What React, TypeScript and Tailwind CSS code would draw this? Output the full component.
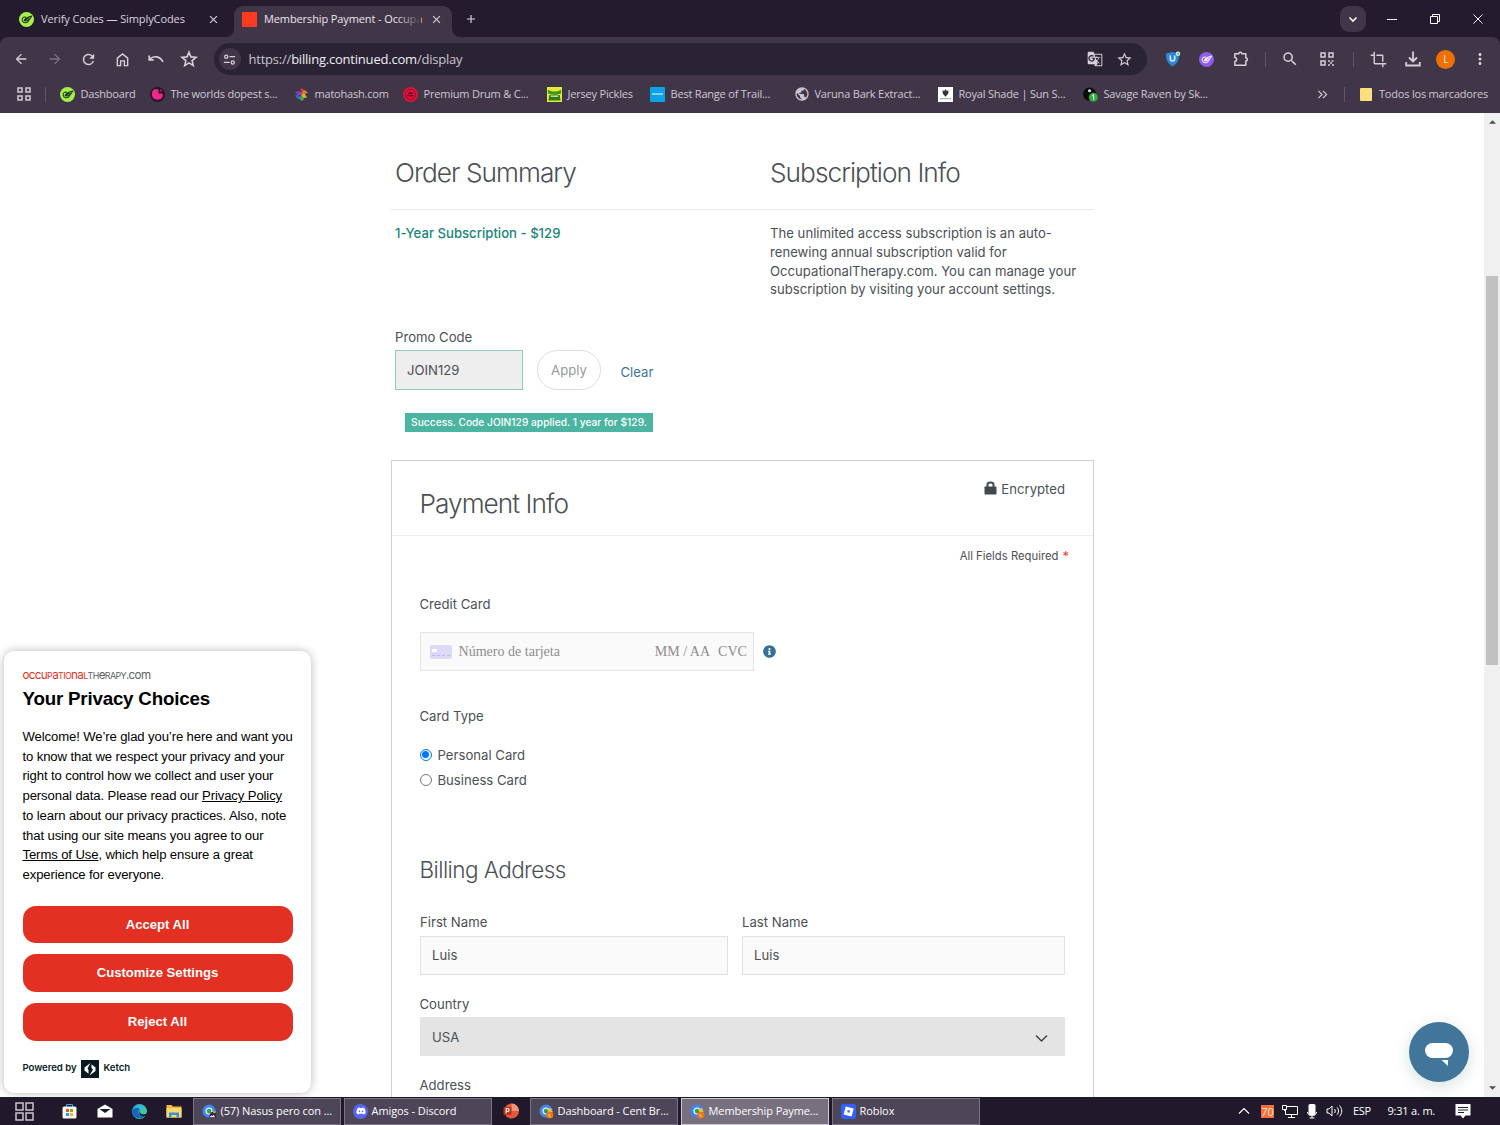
import type { ReactNode } from 'react';
import {
  MdArrowBack,
  MdArrowForward,
  MdClose,
  MdAdd,
  MdRefresh,
  MdStarBorder,
  MdSearch,
  MdCrop,
  MdMoreVert,
  MdGTranslate,
  MdPublic,
} from 'react-icons/md';
import { FaDiscord, FaInfoCircle } from 'react-icons/fa';

const bookmarks = [
  { label: 'Dashboard', icon: <SimplyIcon />, className: 'w-[90px]' },
  { label: 'The worlds dopest s...', icon: <DopestIcon />, className: 'w-[144px]' },
  { label: 'matohash.com', icon: <HashIcon />, className: 'w-[109px]' },
  { label: 'Premium Drum & C...', icon: <DrumIcon />, className: 'w-[144px]' },
  { label: 'Jersey Pickles', icon: <PickleIcon />, className: 'w-[103px]' },
  { label: 'Best Range of Trail...', icon: <TrailIcon />, className: 'w-[144px]' },
  { label: 'Varuna Bark Extract...', icon: <MdPublic className="w-4 h-4 text-[#c9c3d0]" />, className: 'w-[144px]' },
  { label: 'Royal Shade | Sun S...', icon: <RoyalIcon />, className: 'w-[145px]' },
  { label: 'Savage Raven by Sk...', icon: <RavenIcon />, className: 'w-[140px]' },
];

function SimplyIcon({ bg = '#a6f04c', fg = '#22301a' }: { bg?: string; fg?: string }) {
  return (
    <svg viewBox="0 0 16 16" className="w-[15px] h-[15px]" fill="none">
      <circle cx="8" cy="8" r="8" fill={bg} />
      <g stroke={fg} strokeWidth="1.1" strokeLinecap="round" strokeLinejoin="round">
        <path d="M7.500 5.500c-3-.6-4.700 1.500-4 3.800.8 2.500 4.500 3 6.300.8 1-1.200 1.200-2.400 1-3.600" />
        <path d="M5.500 9.300c.5-2.300 2.500-3.600 8-5-1.300 3-3.500 5-6 5.200zM6.800 8.500l3-1.800" />
      </g>
    </svg>
  );
}

function DopestIcon() {
  return (
    <svg viewBox="0 0 16 16" className="w-[15px] h-[15px]">
      <circle cx="8" cy="8" r="8" fill="#2a1226" />
      <path d="M4.500 2.500h4.500v3c0 1.500 1 2 2.500 1.500h2v3c-.8 2.500-3 3.500-5.500 3.500C4 13.500 2 11 2 7.500c0-2.300 1-4 2.500-5z" fill="#f0268c" />
      <path d="M11 2.500l2.500 2h-2.500z" fill="#f0268c" />
    </svg>
  );
}

function HashIcon() {
  return (
    <svg viewBox="0 0 16 16" className="w-[15px] h-[15px]">
      <path d="M7 1l4 2-3 3z" fill="#d83a4a" />
      <path d="M1 5l5-1 1 4-3 1z" fill="#7a3fc0" />
      <path d="M11 3l4 3-5 2-2-2z" fill="#e07a2c" />
      <path d="M1 9l4-1 2 3-3 2z" fill="#3a62d0" />
      <path d="M7 8l4-1 3 4-4 1z" fill="#d8b02e" />
      <path d="M5 12l3-3 3 4-3 2z" fill="#38a860" />
      <circle cx="7.500" cy="7" r="1.500" fill="#b64aa0" />
    </svg>
  );
}

function DrumIcon() {
  return (
    <svg viewBox="0 0 16 16" className="w-[15px] h-[15px]" fill="none">
      <circle cx="8" cy="8" r="8" fill="#e0123c" />
      <circle cx="8" cy="8" r="5.400" stroke="#7c0c2a" strokeWidth=".9" />
      <path d="M4.500 9.300h7M5.700 7.500c1-1.700 3.600-1.700 4.600 0" stroke="#4a0a1c" strokeWidth="1.200" />
    </svg>
  );
}

function PickleIcon() {
  return (
    <svg viewBox="0 0 16 16" className="w-[15px] h-[15px]">
      <rect width="16" height="16" fill="#e6e83a" />
      <path d="M1 3c4 2.500 10 2.500 14 0v4c-4 2-10 2-14 0z" fill="#3f9a1c" />
      <path d="M2.500 8.500h11l1 6h-13z" fill="#2f7a18" />
      <path d="M4 9h8v1.600H4z" fill="#c8dca8" />
    </svg>
  );
}

function TrailIcon() {
  return (
    <div className="w-[15px] h-[15px] bg-[#0aa3ea] rounded-[1px] flex items-center justify-center">
      <div className="w-[11px] h-[2px] bg-white/50" />
    </div>
  );
}

function RoyalIcon() {
  return (
    <svg viewBox="0 0 16 16" className="w-[15px] h-[15px]">
      <rect width="16" height="16" fill="#fff" />
      <path d="M5 3l1.500 1.500L8 2l1.500 2.500L11 3v4l-3 3.500L5 7z" fill="#333" />
      <path d="M2 12.500h12" stroke="#999" />
    </svg>
  );
}

function RavenIcon() {
  return (
    <svg viewBox="0 0 16 16" className="w-[15px] h-[15px]">
      <circle cx="7" cy="7.500" r="7" fill="#0b0b0b" />
      <circle cx="7" cy="4" r="1.700" fill="#ddd" />
      <circle cx="11" cy="11" r="4.800" fill="#2fae3c" />
      <path d="M9.800 9.700l1.500-1.200v5" stroke="#fff" strokeWidth="1.200" fill="none" />
    </svg>
  );
}

function ChromeIcon({ badge }: { badge: 'orange' | 'dark' }) {
  return (
    <svg viewBox="0 0 16 16" className="w-[15px] h-[15px] shrink-0">
      <circle cx="7.500" cy="7.500" r="7" fill="#3f86ee" />
      <path d="M14.500 7.500a7 7 0 0 1-6 7l2.800-6z" fill="#f3c02f" />
      <circle cx="7.500" cy="7.500" r="3.800" fill="#e9f2ec" />
      <circle cx="7.500" cy="7.500" r="2.500" fill="#2f9e58" />
      {badge === 'orange' ? (
        <>
          <path d="M9 5l4-.5 1 4-4 2z" fill="#f7c53c" />
          <circle cx="11.500" cy="11.700" r="3.800" fill="#ee7410" />
          <path d="M10.700 10v3h2" stroke="#ffd9b0" strokeWidth=".8" fill="none" />
        </>
      ) : (
        <>
          <path d="M8 14c0-5 2-6 4-5l3 1v5H8z" fill="#35254a" />
          <path d="M8.500 14l1.200-2 1.500 1 1.300-1.500L14 14z" fill="#f4f0f4" />
        </>
      )}
    </svg>
  );
}

function Cell({ className, children }: { className: string; children: ReactNode }) {
  return <div className={`flex shrink-0 items-center justify-center ${className}`}>{children}</div>;
}

function TabStrip() {
  return (
    <div className="flex h-[37px] bg-[#241c2e] text-[#d9d3de]">
      <div className="flex items-center w-[226px] pl-[18.500px] pt-[2px]">
        <SimplyIcon />
        <span className="ml-[7.500px] w-[160px] text-[11px] tracking-[-0.09px] whitespace-nowrap">Verify Codes — SimplyCodes</span>
        <MdClose className="ml-[5.500px] w-[13px] h-[13px]" />
      </div>
      <div className="flex items-end">
        <div className="w-2 h-2 bg-[#403648]">
          <div className="w-2 h-2 bg-[#241c2e] rounded-br-lg" />
        </div>
        <div className="flex items-center w-[218px] h-[31px] mt-[6px] pl-2 pb-[4px] bg-[#403648] rounded-t-[9px]">
          <div className="w-[15px] h-[15px] bg-[#fb3a22]" />
          <div className="relative ml-[7px] w-[157px] whitespace-nowrap text-[11px] tracking-[-0.11px] text-[#eae6ee]">
            Membership Payment - Occupa
            <div className="absolute right-0 top-0 w-6 h-full bg-gradient-to-r from-transparent to-[#403648]" />
          </div>
          <MdClose className="ml-[9px] w-[13px] h-[13px]" />
        </div>
        <div className="w-2 h-2 bg-[#403648]">
          <div className="w-2 h-2 bg-[#241c2e] rounded-bl-lg" />
        </div>
      </div>
      <Cell className="w-[21px] pt-[1px]">
        <MdAdd className="w-[14px] h-[14px]" />
      </Cell>
      <div className="flex-1" />
      <div className="flex items-center pt-[1px] pr-[1px]">
        <Cell className="w-[26px] h-[26px] rounded-[9px] bg-[#403648]">
          <svg viewBox="0 0 12 12" className="w-3 h-3" fill="none" stroke="#fff" strokeWidth="1.600">
            <path d="M2.500 4.500L6 8l3.500-3.500" />
          </svg>
        </Cell>
        <Cell className="w-[52px]">
          <div className="w-[10px] h-px bg-white" />
        </Cell>
        <Cell className="w-[34px]">
          <svg viewBox="0 0 12 12" className="w-3 h-3" fill="none" stroke="#fff" strokeWidth="1">
            <path d="M1.500 3.500h7v7h-7zM3.500 3.500v-2h7v7h-2" />
          </svg>
        </Cell>
        <Cell className="w-[42px] ml-[5px]">
          <svg viewBox="0 0 12 12" className="w-3 h-3" stroke="#fff" strokeWidth="1">
            <path d="M1.500 1.500l9 9M10.500 1.500l-9 9" />
          </svg>
        </Cell>
      </div>
    </div>
  );
}

function Toolbar() {
  return (
    <div className="flex items-center h-[44px] pl-[4.600px] text-[#d5cedb] bg-[#403648] rounded-t-lg">
      <Cell className="w-[33.600px]">
        <MdArrowBack className="w-4 h-4" />
      </Cell>
      <Cell className="w-[33.600px]">
        <MdArrowForward className="w-4 h-4 text-[#7b7183]" />
      </Cell>
      <Cell className="w-[33.600px]">
        <MdRefresh className="w-[17px] h-[17px]" />
      </Cell>
      <Cell className="w-[33.600px]">
        <svg viewBox="0 0 16 16" className="w-[15px] h-[15px]" fill="none" stroke="currentColor" strokeWidth="1.500">
          <path d="M2.500 6.500L8 2l5.500 4.500v8H10V9.500H6v5H2.500z" />
        </svg>
      </Cell>
      <Cell className="w-[33.600px]">
        <svg viewBox="0 0 16 16" className="w-4 h-4" fill="none" stroke="currentColor" strokeWidth="1.700">
          <path d="M1.200 4.500v4.300h4.500M1.500 8.500C5 4.500 12 4.500 15 11" />
        </svg>
      </Cell>
      <Cell className="w-[33.600px]">
        <svg viewBox="0 0 18 18" className="w-[18px] h-[18px]" fill="none" stroke="currentColor" strokeWidth="1.600">
          <path d="M9 2.200l1.900 4.700 5.100.4-3.900 3.300 1.200 5L9 12.900l-4.300 2.700 1.200-5L2 7.300l5.100-.4z" />
        </svg>
      </Cell>
      <div className="flex items-center w-[933px] h-8 ml-[7.800px] pl-[5px] rounded-full bg-[#292333]">
        <Cell className="w-[22px] h-[22px] rounded-full bg-[#403648]">
          <svg viewBox="0 0 14 14" className="w-[13px] h-[13px]" fill="none" stroke="currentColor" strokeWidth="1.400">
            <circle cx="3.500" cy="4" r="1.700" />
            <path d="M7 4h6M1 10.200h6" />
            <circle cx="10.500" cy="10.200" r="1.700" />
          </svg>
        </Cell>
        <span className="flex-1 ml-[7.500px] pt-px text-[13px] tracking-[-0.21px] text-[#cbc5d1]">
          https://<span className="text-[#f0edf3]">billing.continued.com</span>/display
        </span>
        <Cell className="w-[30px]">
          <MdGTranslate className="w-4 h-4" />
        </Cell>
        <Cell className="w-[30px] mr-[7px]">
          <MdStarBorder className="w-[17px] h-[17px]" />
        </Cell>
      </div>
      <Cell className="w-[34px] ml-[9px]">
        <svg viewBox="0 0 16 16" className="w-4 h-4">
          <path d="M1 2.500L7.500 1 14 2.500c.3 6-1.500 10-6.500 13C2.500 12.500.700 8.500 1 2.500z" fill="#2f86d8" />
          <path d="M5.300 4.500v3.300c0 3 4.400 3 4.400 0V4.500" stroke="#d6ecff" strokeWidth="1.600" fill="none" />
          <circle cx="13" cy="2.700" r="2.200" fill="#d6f4ea" />
          <circle cx="13" cy="2.700" r="1" fill="#3cb58c" />
        </svg>
      </Cell>
      <Cell className="w-[34px]">
        <SimplyIcon bg="#8f5cf0" fg="#f2eaff" />
      </Cell>
      <Cell className="w-[34px]">
        <svg viewBox="0 0 16 16" className="w-4 h-4" fill="none" stroke="currentColor" strokeWidth="1.500" strokeLinejoin="round">
          <path d="M1.800 2.800h4c0-2 3-2 3 0h4V7c2.200 0 2.200 3 0 3v4.200h-11v-3.600c2.400 0 2.400-4 0-4z" />
        </svg>
      </Cell>
      <Cell className="w-[16px]">
        <div className="w-px h-[15px] bg-[#5f5568]" />
      </Cell>
      <Cell className="w-8">
        <MdSearch className="w-[18px] h-[18px]" />
      </Cell>
      <Cell className="w-[42px]">
        <svg viewBox="0 0 14 14" className="w-[14px] h-[14px]" fill="none" stroke="currentColor" strokeWidth="1.500">
          <path d="M1 1h4v4H1zM9 1h4v4H9zM1 9h4v4H1z" />
          <path d="M8 9h2M11.500 9h2M10 11h2M8 13h2M12 13h2" strokeDasharray="2 .5" />
        </svg>
      </Cell>
      <Cell className="w-3">
        <div className="w-px h-[15px] bg-[#5f5568]" />
      </Cell>
      <Cell className="w-[38px]">
        <MdCrop className="w-[17px] h-[17px]" />
      </Cell>
      <Cell className="w-[30px]">
        <svg viewBox="0 0 16 16" className="w-4 h-4" fill="none" stroke="currentColor" strokeWidth="1.800">
          <path d="M8 .5v9.500M4 6.500l4 4 4-4M1.200 11v3.500h13.600V11" />
        </svg>
      </Cell>
      <Cell className="w-9">
        <div className="w-[19px] h-[19px] rounded-full bg-[#ee6f06] text-[#ffe6cf] text-[10px] flex items-center justify-center">L</div>
      </Cell>
      <Cell className="w-8">
        <MdMoreVert className="w-[18px] h-[18px]" />
      </Cell>
    </div>
  );
}

function BookmarksBar() {
  return (
    <div className="flex items-center h-[32px] pb-[6px] text-[11px] tracking-[-0.2px] text-[#cfc8d5] bg-[#403648] whitespace-nowrap">
      <Cell className="w-[43px] pl-[5px]">
        <svg viewBox="0 0 14 14" className="w-[14px] h-[14px]" fill="none" stroke="currentColor" strokeWidth="1.500">
          <path d="M1 1h4v4H1zM9 1h4v4H9zM1 9h4v4H1zM9 9h4v4H9z" />
        </svg>
      </Cell>
      <div className="ml-[2px] mr-[14px] w-px h-[15px] bg-[#5f5568]" />
      {bookmarks.map((b) => (
        <div key={b.label} className={`flex shrink-0 items-center gap-[5.500px] ${b.className}`}>
          <div className="w-[15px] shrink-0">{b.icon}</div>
          <span>{b.label}</span>
        </div>
      ))}
      <div className="flex-1" />
      <svg viewBox="0 0 12 12" className="w-[11px] h-[11px] mr-4" fill="none" stroke="currentColor" strokeWidth="1.300">
        <path d="M1.500 2L5.500 6l-4 4M6.500 2l4 4-4 4" />
      </svg>
      <div className="w-px h-[15px] bg-[#5f5568]" />
      <div className="w-3 h-[13px] ml-[15px] mr-[7px] bg-[#fbdf7c] rounded-[1px]" />
      <span className="w-[121px]">Todos los marcadores</span>
    </div>
  );
}

function Field({ label, value, className }: { label: string; value: string; className: string }) {
  return (
    <div className={className}>
      <div className="h-[19px] leading-[20px]">{label}</div>
      <div className="mt-[5px] h-[39px] flex items-center pl-[11px] border border-[#e2e2e2] bg-[#fafafa]">{value}</div>
    </div>
  );
}

function OrderSummary() {
  return (
    <>
      <div className="flex pt-[41px] pl-[4px] pb-[17px] border-b border-[#e9e9e9] text-[26.250px] leading-[38px] font-light tracking-[-0.97px]">
        <h1 className="w-[375px]">Order Summary</h1>
        <h1>Subscription Info</h1>
      </div>
      <div className="flex pt-[14px] pl-[4px]">
        <div className="w-[375px] font-medium text-[#188676]">1-Year Subscription - $129</div>
        <p className="whitespace-nowrap">
          The unlimited access subscription is an auto-
          <br />
          renewing annual subscription valid for
          <br />
          OccupationalTherapy.com. You can manage your
          <br />
          subscription by visiting your account settings.
        </p>
      </div>
      <div className="mt-[28px] ml-[4px] h-[19px] leading-[20px]">Promo Code</div>
      <div className="mt-[4px] ml-[4px] h-10 flex items-center">
        <div className="w-[128px] h-10 pl-[11px] flex items-center border border-[#8fcdb9] bg-[#eeeeee]">JOIN129</div>
        <button className="ml-[14px] w-[64px] h-10 rounded-full border border-[#dedede] text-[#96999b]">Apply</button>
        <a className="ml-[19.500px] mt-[5px] text-[#41759b]">Clear</a>
      </div>
      <div className="mt-[23px] ml-[14px] w-[248px] h-[19px] flex items-center justify-center bg-[#4cb5a2] text-white text-[10.200px] font-medium whitespace-nowrap">
        Success. Code JOIN129 applied. 1 year for $129.
      </div>
    </>
  );
}

function PaymentPanel() {
  return (
    <div className="mt-[28px] h-[660px] border border-[#cfd1d2]">
      <div className="flex justify-between h-[75px] pl-[27.500px] pr-[28px] border-b border-[#eeeeee]">
        <h1 className="pt-[24px] text-[26.250px] leading-[38px] font-light tracking-[-0.97px]">Payment Info</h1>
        <div className="flex items-start pt-[19px] gap-[4px]">
          <svg viewBox="0 0 13 14" className="w-[13px] h-[14px] mt-[1px]">
            <path d="M3.500 6V3.500Q3.500 1.500 6.500 1.500T9.500 3.500V6" fill="none" stroke="#43484d" strokeWidth="2" />
            <rect x=".5" y="5.500" width="12" height="8" rx=".8" fill="#43484d" />
          </svg>
          Encrypted
        </div>
      </div>
      <div className="mt-[10px] mr-[24px] h-[19px] leading-[20px] flex justify-end gap-[4px] text-[11.250px]">
        All Fields Required <span className="text-[#e8432f] text-[13px]">*</span>
      </div>
      <div className="pl-[27.500px]">
        <div className="mt-[29px] h-[19px] leading-[20px]">Credit Card</div>
        <div className="mt-[19px] ml-[.5px] flex items-center">
          <div className="flex items-center w-[334px] h-[39px] pl-[9px] pr-[6px] border border-[#e4e4e4] bg-[#fafafa] font-['Liberation_Serif',serif] text-[14.060px] tracking-normal text-[#8d8d8d]">
            <div className="w-[22px] h-[14px] rounded-[2px] bg-[#dcdaf6] flex flex-col justify-between pt-[4px] pb-[3px] px-[2px]">
              <div className="w-[5px] h-[3px] bg-white rounded-[1px]" />
              <div className="h-px border-t border-dashed border-[#bdb9e8]" />
            </div>
            <span className="ml-[6.500px]">Número de tarjeta</span>
            <span className="ml-auto">MM / AA</span>
            <span className="ml-[8px]">CVC</span>
          </div>
          <FaInfoCircle className="ml-[9px] w-[13px] h-[13px] text-[#386f96]" />
        </div>
        <div className="mt-[35px] h-[19px] leading-[20px]">Card Type</div>
        <label className="mt-[20px] h-[19px] flex items-center gap-[6px]">
          <span className="w-3 h-3 rounded-full border-[1.500px] border-[#0075ff] flex items-center justify-center">
            <span className="w-[7px] h-[7px] rounded-full bg-[#0075ff]" />
          </span>
          <span className="leading-[20px]">Personal Card</span>
        </label>
        <label className="mt-[6.500px] h-[19px] flex items-center gap-[6px]">
          <span className="w-3 h-3 rounded-full border border-[#767676]" />
          <span className="leading-[20px]">Business Card</span>
        </label>
        <h2 className="mt-[65.500px] text-[22.500px] leading-[30px] font-light tracking-[-0.57px]">Billing Address</h2>
        <div className="mt-[27px] ml-[.5px] flex gap-[14px]">
          <Field label="First Name" value="Luis" className="w-[308px]" />
          <Field label="Last Name" value="Luis" className="w-[323px]" />
        </div>
        <div className="mt-[19px] h-[19px] leading-[20px]">Country</div>
        <div className="mt-[4px] ml-[.5px] w-[645px] h-[39px] pl-[12px] pr-[17px] flex items-center justify-between bg-[#e4e4e4]">
          <span className="pt-px">USA</span>
          <svg viewBox="0 0 13 13" className="w-[13px] h-[13px] mt-[3px]" fill="none" stroke="#444" strokeWidth="1.500">
            <path d="M1 3.500l5.500 5.500L12 3.500" />
          </svg>
        </div>
        <div className="mt-[19px] h-[19px] leading-[20px]">Address</div>
      </div>
    </div>
  );
}

function PrivacyCard() {
  return (
    <div className="absolute left-[4px] top-[538px] w-[307px] h-[442px] px-[18.500px] rounded-[10px] bg-white shadow-[0_0_10px_rgba(0,0,0,0.28)] font-['Liberation_Sans',Arial,sans-serif] text-black">
      <div className="mt-[18px] h-[12px] flex items-baseline font-['Inter',sans-serif] text-[11.600px] leading-[12px] tracking-[-0.62px] text-[#5d6063] whitespace-nowrap">
        <span className="text-[#e2301f]">
          occu<span className="text-[8.900px]">P</span>a<span className="text-[8.900px]">TIO</span>na<span className="text-[8.900px]">L</span>
        </span>
        <span className="text-[8.900px]">TH</span>e<span className="text-[8.900px]">RAPY</span>.com
      </div>
      <h2 className="mt-[6px] text-[18.750px] leading-[24px] font-bold tracking-[-0.2px]">Your Privacy Choices</h2>
      <p className="mt-[16px] text-[13.125px] leading-[19.700px] tracking-[-0.11px] whitespace-nowrap">
        Welcome! We’re glad you’re here and want you
        <br />
        to know that we respect your privacy and your
        <br />
        right to control how we collect and user your
        <br />
        personal data. Please read our <u>Privacy Policy</u>
        <br />
        to learn about our privacy practices. Also, note
        <br />
        that using our site means you agree to our
        <br />
        <u>Terms of Use</u>, which help ensure a great
        <br />
        experience for everyone.
      </p>
      <div className="mt-[21px] flex flex-col gap-[11.250px]">
        {['Accept All', 'Customize Settings', 'Reject All'].map((text) => (
          <button key={text} className="h-[37.500px] rounded-[13px] bg-[#e23022] text-white text-[13.125px] font-bold tracking-normal">
            {text}
          </button>
        ))}
      </div>
      <div className="mt-[19px] flex items-center text-[9.600px] tracking-[-0.05px] font-semibold text-[#071c26] font-['Inter',sans-serif]">
        <span className="w-[53px] whitespace-nowrap">Powered by</span>
        <svg viewBox="0 0 18 18" className="w-[18px] h-[18px] mx-[5px]">
          <rect width="18" height="18" fill="#071821" />
          <path d="M9.500 3L3.500 7.500v3L6 12.500l1.500 1.200V10L6.500 8.500zM8.500 15.500l6-4.500V7.500L12 5.500l-1.500-1.200V8L12 9.500z" fill="#fff" />
        </svg>
        Ketch
      </div>
    </div>
  );
}

function Scrollbar() {
  return (
    <div className="w-4 flex flex-col items-center justify-between bg-[#f0f0f0]">
      <svg viewBox="0 0 8 4" className="w-[7px] h-[4px] mt-[7px]">
        <path d="M0 4l4-4 4 4z" fill="#505050" />
      </svg>
      <div className="w-3 h-[389px] mt-[152px] mb-auto bg-[#c1c1c1]" />
      <svg viewBox="0 0 8 4" className="w-[7px] h-[4px] mb-[7px]">
        <path d="M0 0l4 4 4-4z" fill="#505050" />
      </svg>
    </div>
  );
}

function ChatButton() {
  return (
    <div className="absolute left-[1409px] top-[909px] w-[60px] h-[60px] rounded-full bg-[#41769a] shadow-[0_4px_16px_rgba(0,60,60,0.16)]">
      <svg viewBox="0 0 60 60" className="w-full h-full">
        <rect x="16" y="21" width="28" height="15" rx="7.500" fill="#fff" />
        <path d="M32.500 38h6.500v6z" fill="#fff" />
      </svg>
    </div>
  );
}

function TaskButton({ label, icon, active }: { label: string; icon: ReactNode; active?: boolean }) {
  return (
    <div
      className={`flex shrink-0 items-center gap-[3.500px] w-[148px] h-[27px] pl-2 border text-white ${
        active ? 'bg-[#77707f] border-[#cdc8d2]' : 'bg-[#4d4558] border-[#7c7486]'
      }`}
    >
      {icon}
      <span>{label}</span>
    </div>
  );
}

function Taskbar() {
  return (
    <div className="flex items-center h-[28px] bg-[#20182b] text-[11px] tracking-[-0.08px] text-white whitespace-nowrap">
      <Cell className="w-[52px] pr-[3px]">
        <svg viewBox="0 0 19 19" className="w-[19px] h-[19px]" fill="none" stroke="#c8c4cc" strokeWidth="1.500">
          <path d="M1 1h7v7H1zM11 1h7v7h-7zM1 11h7v7H1zM11 11h7v7h-7z" />
        </svg>
      </Cell>
      <Cell className="w-[35px]">
        <svg viewBox="0 0 15 16" className="w-[15px] h-4">
          <path d="M4.500 4V1.500h6V4" stroke="#3fa4e6" fill="none" />
          <rect x=".5" y="3.500" width="14" height="12" rx="1.500" fill="#f6f6f6" />
          <path d="M4 6h3v3H4z" fill="#ee4f26" />
          <path d="M8 6h3v3H8z" fill="#7db90a" />
          <path d="M4 10h3v3H4z" fill="#1ba1e8" />
          <path d="M8 10h3v3H8z" fill="#fbb70e" />
        </svg>
      </Cell>
      <Cell className="w-[35px]">
        <svg viewBox="0 0 16 14" className="w-4 h-[14px]">
          <path d="M.5 5L8 .5 15.500 5v8.500H.5z" fill="#fff" />
          <path d="M2.500 5h11L8 9z" fill="#20182b" />
        </svg>
      </Cell>
      <Cell className="w-[35px]">
        <svg viewBox="0 0 16 16" className="w-[15px] h-[15px]">
          <defs>
            <linearGradient id="edge" x1="0" y1="0" x2="1" y2="1">
              <stop offset="0" stopColor="#2aa9e8" />
              <stop offset="1" stopColor="#4cd38a" />
            </linearGradient>
          </defs>
          <circle cx="8" cy="8" r="8" fill="url(#edge)" />
          <path d="M0 8c1-5 8-5 8.500-1.500C6 7 6 11 10 12.200c2 .5 3.500 0 4.700-.7A8 8 0 0 1 0 8z" fill="#1467c0" />
          <path d="M8.800 7.300c-1.200 2 .7 3.700 3 3.700 2 0 3.500-.8 4-1.800l.2 2-2 1.800c-5 1-8-3.500-5.200-5.700z" fill="#20182b" />
        </svg>
      </Cell>
      <Cell className="w-[36px] pr-[2px]">
        <svg viewBox="0 0 16 14" className="w-4 h-[14px]">
          <path d="M.5 1h5l1.500 1.500h8.500v11H.5z" fill="#f2b83a" />
          <path d="M.5 4h15v9.500H.5z" fill="#fbd873" />
          <path d="M3 13.500V8.500h10v5h-2.500V11h-5v2.500z" fill="#3c8fd4" />
        </svg>
      </Cell>
      <div className="flex items-center gap-[3px]">
        <TaskButton label="(57) Nasus pero con ..." icon={<ChromeIcon badge="dark" />} />
        <TaskButton
          label="Amigos - Discord"
          icon={
            <span className="w-[15px] h-[15px] shrink-0 rounded-full bg-[#5865f2] flex items-center justify-center">
              <FaDiscord className="w-[10px] h-[10px]" />
            </span>
          }
        />
      </div>
      <Cell className="w-[38px]">
        <svg viewBox="0 0 16 16" className="w-4 h-4">
          <circle cx="8.500" cy="8" r="7.500" fill="#e0593a" />
          <path d="M8.500.5A7.500 7.500 0 0 1 16 8H8.500z" fill="#f59578" />
          <rect x=".5" y="4" width="8" height="8" rx="1" fill="#b9321a" />
          <path d="M3.200 10.500v-5h1.500a1.400 1.400 0 0 1 0 2.900H3.200" stroke="#fff" strokeWidth="1.100" fill="none" />
        </svg>
      </Cell>
      <div className="flex items-center gap-[3px]">
        <TaskButton label="Dashboard - Cent Br..." icon={<ChromeIcon badge="orange" />} />
        <TaskButton label="Membership Payme..." icon={<ChromeIcon badge="orange" />} active />
        <TaskButton
          label="Roblox"
          icon={
            <svg viewBox="0 0 15 15" className="w-[15px] h-[15px]">
              <rect width="15" height="15" rx="2.500" fill="#335fff" />
              <path d="M4.700 2.500l8 2.100-2.100 8-8-2.100zM6.800 6l-.6 2.200 2.200.6.6-2.200z" fill="#fff" fillRule="evenodd" />
            </svg>
          }
        />
      </div>
      <div className="flex-1" />
      <Cell className="w-[26px]">
        <svg viewBox="0 0 12 12" className="w-3 h-3" fill="none" stroke="#fff" strokeWidth="1.200">
          <path d="M1 8.500l5-5 5 5" />
        </svg>
      </Cell>
      <div className="ml-[4px] w-[13px] h-[13px] bg-[#f4713c] text-[#ffe3c8] leading-[13px] text-center">70</div>
      <svg viewBox="0 0 16 16" className="ml-[8px] w-4 h-4" fill="none" stroke="#fff" strokeWidth="1">
        <path d="M5 3.500h10.500v8H3.500V7M.5 2.500h4v4h-4zM2.500 6.500V8M6 14.500h7M9.500 11.500v3" />
      </svg>
      <svg viewBox="0 0 12 16" className="ml-[8px] w-3 h-4">
        <rect x="2.500" y="1" width="7" height="11" rx="1.500" fill="#fff" />
        <path d="M1.500 9c0 5 9 5 9 0M6 12v3M3.500 15h5" fill="none" stroke="#fff" />
      </svg>
      <svg viewBox="0 0 17 14" className="ml-[8px] w-[17px] h-[14px]" fill="none" stroke="#fff" strokeWidth="1">
        <path d="M1 5h2l3-3v10L3 9H1zM8.500 5c1 1.300 1 2.700 0 4M11 3.300c2 2.300 2 5.100 0 7.400M13.500 1.500c3 3.500 3 7.500 0 11" />
      </svg>
      <span className="ml-[10px] w-[34.500px] tracking-[-0.3px]">ESP</span>
      <span className="w-[67.500px] tracking-[-0.2px]">9:31 a. m.</span>
      <svg viewBox="0 0 16 16" className="w-4 h-4 mr-[29px]">
        <path d="M.5 1h15v11.500h-5L8 15.500l-2.500-3h-5z" fill="#fff" />
        <path d="M3 4.500h10M3 7h10M3 9.500h6" stroke="#20182b" />
      </svg>
    </div>
  );
}

export default function App() {
  return (
    <div className="flex flex-col w-[1500px] h-[1125px] overflow-hidden font-['Open_Sans',sans-serif]">
      <TabStrip />
      <div className="bg-[#241c2e]">
        <Toolbar />
      </div>
      <BookmarksBar />
      <div className="relative flex flex-1 min-h-0 overflow-hidden bg-white">
        <div className="flex-1 pl-[391px] font-['Inter',sans-serif] text-[13.125px] leading-[18.750px] tracking-[0.02px] text-[#4b5055]">
          <div className="w-[703px]">
            <OrderSummary />
            <PaymentPanel />
          </div>
        </div>
        <Scrollbar />
        <PrivacyCard />
        <ChatButton />
      </div>
      <Taskbar />
    </div>
  );
}
